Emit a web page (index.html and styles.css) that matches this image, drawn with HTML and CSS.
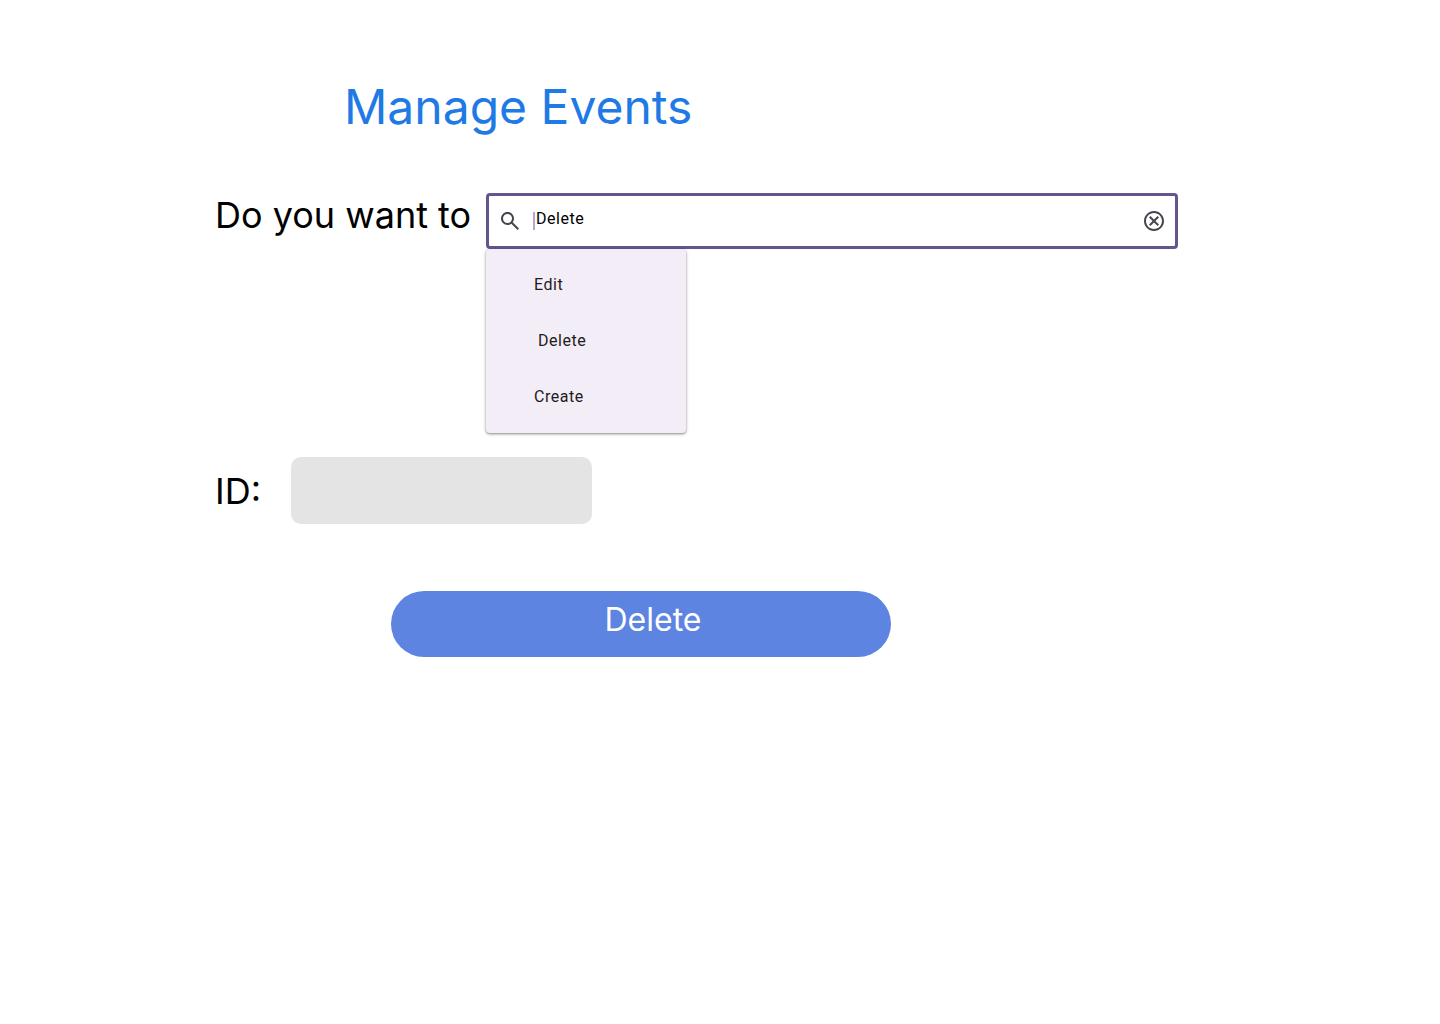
FILE: index.html
```html
<!DOCTYPE html>
<html lang="en">
<head>
  <meta charset="utf-8">
  <title>Manage Events</title>
  <link rel="stylesheet" href="styles.css">
</head>
<body>
  <main class="page">
    <h1 class="title">Manage Events</h1>
    <form class="form">
      <div class="row">
        <label class="label" for="action">Do you want to</label>
        <div class="combo">
          <div class="field">
            <svg class="icon" viewBox="0 0 24 24" aria-hidden="true"><path d="M19.600 21L13.300 14.700C12.800 15.100 12.225 15.417 11.575 15.650C10.925 15.883 10.233 16 9.500 16C7.683 16 6.146 15.371 4.888 14.113C3.629 12.854 3 11.317 3 9.500C3 7.683 3.629 6.146 4.888 4.888C6.146 3.629 7.683 3 9.500 3C11.317 3 12.854 3.629 14.113 4.888C15.371 6.146 16 7.683 16 9.500C16 10.233 15.883 10.925 15.650 11.575C15.417 12.225 15.100 12.800 14.700 13.300L21 19.600L19.600 21ZM9.500 14C10.750 14 11.813 13.563 12.688 12.688C13.563 11.813 14 10.750 14 9.500C14 8.250 13.563 7.188 12.688 6.313C11.813 5.438 10.750 5 9.500 5C8.250 5 7.188 5.438 6.313 6.313C5.438 7.188 5 8.250 5 9.500C5 10.750 5.438 11.813 6.313 12.688C7.188 13.563 8.250 14 9.500 14Z"/></svg>
            <span class="caret"></span>
            <input class="input" id="action" type="text" value="Delete">
            <button class="clear" type="button" aria-label="Clear">
              <svg class="icon" viewBox="0 0 24 24" aria-hidden="true"><path d="M8.400 17L12 13.400L15.600 17L17 15.600L13.400 12L17 8.400L15.600 7L12 10.600L8.400 7L7 8.400L10.600 12L7 15.600L8.400 17ZM12 2C6.470 2 2 6.470 2 12s4.470 10 10 10 10-4.470 10-10S17.530 2 12 2zm0 18c-4.410 0-8-3.590-8-8s3.590-8 8-8 8 3.590 8 8-3.590 8-8 8z"/></svg>
            </button>
          </div>
          <div class="menu">
            <button class="option" type="button">Edit</button>
            <button class="option selected" type="button">Delete</button>
            <button class="option" type="button">Create</button>
          </div>
        </div>
      </div>
      <div class="row id-row">
        <label class="label" for="event-id">ID:</label>
        <input class="id-input" id="event-id" type="text">
      </div>
      <button class="submit" type="submit">Delete</button>
    </form>
  </main>
</body>
</html>
```

FILE: styles.css
```css
* { box-sizing: border-box; }

body {
  margin: 0;
  background: #fff;
  font-family: Inter, sans-serif;
  color: #000;
}

.page { padding: 78px 262px 64px 215px; }

.title {
  margin: 0 0 57px 129px;
  font-size: 48px;
  line-height: 58px;
  font-weight: 400;
  color: #1f7ae5;
}

.row { display: flex; align-items: flex-start; }

.label {
  flex: none;
  font-size: 36px;
  line-height: 44px;
}

.combo {
  flex: 1;
  margin-left: 15px;
  font-family: Roboto, sans-serif;
}

.field {
  display: flex;
  align-items: center;
  height: 56px;
  padding: 0 9px;
  border: 3px solid #65558f;
  border-radius: 4px;
}

.icon {
  display: block;
  flex: none;
  width: 24px;
  height: 24px;
  fill: #49454f;
}

.caret {
  width: 2px;
  height: 18px;
  margin: 0 1px 0 11px;
  background: #b2aac7;
}

.input {
  flex: 1;
  min-width: 0;
  padding: 0 0 4px;
  border: 0;
  outline: 0;
  background: none;
  font: 400 16px/24px Roboto, sans-serif;
  letter-spacing: 0.5px;
}

.clear {
  padding: 0;
  border: 0;
  background: none;
}

.menu {
  display: flex;
  flex-direction: column;
  width: 200px;
  padding: 8px 0;
  border-radius: 4px;
  background: #f3edf7;
  box-shadow: 0 1px 3px 1px rgba(0, 0, 0, 0.15), 0 1px 2px rgba(0, 0, 0, 0.3);
}

.option {
  height: 56px;
  padding: 0 48px;
  border: 0;
  background: none;
  font: 400 16px/24px Roboto, sans-serif;
  letter-spacing: 0.5px;
  text-align: left;
  color: #1d1b20;
}

.selected { padding-left: 52px; }

.id-row {
  align-items: center;
  margin-top: 24px;
}

.id-input {
  width: 301px;
  height: 67px;
  margin-left: 30px;
  padding: 0 16px;
  border: 0;
  border-radius: 10px;
  background: #e4e4e4;
  font: 400 24px/32px Inter, sans-serif;
}

.submit {
  display: block;
  width: 500px;
  height: 66px;
  margin: 67px 0 0 176px;
  padding: 0 0 8px 24px;
  border: 0;
  border-radius: 33px;
  background: #5d84e1;
  font: 400 32px/40px Inter, sans-serif;
  color: #fff;
}
```
